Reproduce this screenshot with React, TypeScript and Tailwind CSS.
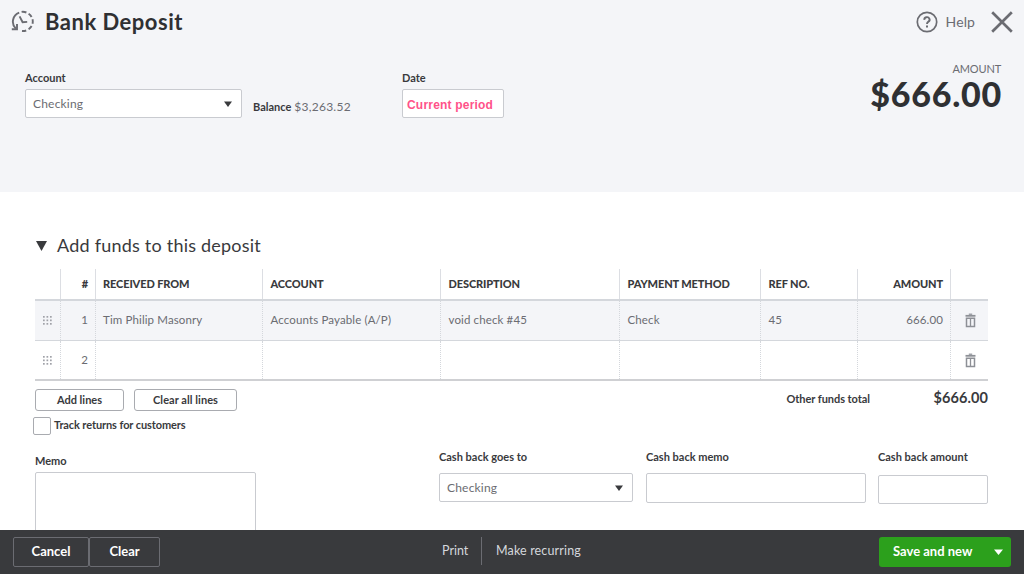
import type { ReactNode } from 'react'

const lines = [
  { num: 1, from: 'Tim Philip Masonry', account: 'Accounts Payable (A/P)', description: 'void check #45', method: 'Check', ref: '45', amount: '666.00' },
  { num: 2, from: '', account: '', description: '', method: '', ref: '', amount: '' },
]

const gridCols = 'grid grid-cols-[26px_35px_167px_178px_179px_141px_97px_93px_37px]'

function HistoryIcon() {
  return (
    <svg className="w-6 h-6" viewBox="0 0 24 24" fill="none" stroke="#6b6c72" strokeWidth="1.9">
      <path d="M4.8 18.6A9.6 9.6 0 0 1 8.2 2.7M10.6 1.9A9.6 9.6 0 0 1 15.4 2.5M17.6 3.7A9.6 9.6 0 0 1 20.6 7M21.5 9.2A9.6 9.6 0 0 1 21.5 13.8M20.6 16A9.6 9.6 0 0 1 17.6 19.2M15.2 20.5A9.6 9.6 0 0 1 11 21" />
      <path d="M0.8 19.2H6V14" />
      <path d="M8.6 6.4L11.6 12.3L16.2 11.9" />
    </svg>
  )
}

function TrashIcon() {
  return (
    <svg className="w-[11px] h-[15px]" viewBox="0 0 11 15" fill="none" stroke="#8d9096">
      <path d="M0.5 2.8H10.5" strokeWidth="1.8" />
      <path d="M3.8 1.2H7.2" strokeWidth="1.2" />
      <path d="M1.5 5.2V13.6H9.5V5.2Z" strokeWidth="1.5" />
      <path d="M5.5 5V13" strokeWidth="1.3" />
    </svg>
  )
}

function DragHandle() {
  return (
    <svg className="w-[9px] h-[9px]" viewBox="0 0 9 9" fill="#a0a2a8">
      {[0, 3.5, 7].map((y) => [0, 3.5, 7].map((x) => <rect key={`${x}-${y}`} x={x} y={y} width="1.7" height="1.7" />))}
    </svg>
  )
}

function Caret({ className }: { className: string }) {
  return (
    <svg className={className} viewBox="0 0 8 6" preserveAspectRatio="none" fill="currentColor">
      <path d="M0 0.5H8L4 6Z" />
    </svg>
  )
}

function Label({ children }: { children: ReactNode }) {
  return <div className="text-[11px] leading-4 font-bold text-[#393a3d] whitespace-nowrap">{children}</div>
}

function Select({ value, className }: { value: string; className: string }) {
  return (
    <div className={`flex items-center justify-between border border-[#c9cbd0] rounded-[2px] bg-white pl-[7px] pr-[9px] text-[12px] tracking-[0.2px] text-[#6b6c72] ${className}`}>
      <span>{value}</span>
      <Caret className="w-2 h-[6px] text-[#393a3d]" />
    </div>
  )
}

export default function App() {
  return (
    <div className="w-[1024px] h-[574px] flex flex-col overflow-hidden bg-white text-[#393a3d] font-['Lato',sans-serif]">
      {/* Header */}
      <header className="h-[192px] shrink-0 bg-[#f4f5f8]">
        <div className="h-[43px] flex items-center justify-between pl-[11px] pr-[11px]">
          <div className="flex items-center">
            <HistoryIcon />
            <h1 className="ml-[10px] text-[22px] font-bold tracking-[0.5px] text-[#2f3033]">Bank Deposit</h1>
          </div>
          <div className="flex items-center text-[#6b6c72]">
            <svg className="w-[22px] h-[22px]" viewBox="0 0 22 22" fill="none" stroke="currentColor" strokeWidth="1.7">
              <circle cx="11" cy="11" r="9.7" />
              <path d="M8.4 8.9A2.6 2.4 0 1 1 12.4 10.6Q11 11.5 11 13" strokeWidth="1.9" />
              <path d="M11 14.4V16.4" strokeWidth="2" />
            </svg>
            <span className="ml-[8px] -mt-px text-[14px] tracking-[0.1px]">Help</span>
            <svg className="ml-[16px] w-[22px] h-[22px]" viewBox="0 0 22 22" fill="none" stroke="currentColor" strokeWidth="2.7">
              <path d="M1.2 1.2L20.8 20.8M20.8 1.2L1.2 20.8" />
            </svg>
          </div>
        </div>

        <div className="flex justify-between pl-[25px] pr-[23px]">
          <div className="flex pt-[27px]">
            <div>
              <Label>Account</Label>
              <Select value="Checking" className="mt-[3px] w-[217px] h-[29px]" />
            </div>
            <div className="ml-[11px] mt-[28px] h-4 w-[149px] flex items-baseline">
              <span className="text-[11px] font-bold">Balance</span>
              <span className="ml-[3px] text-[12px] tracking-[0.25px] text-[#6b6c72]">$3,263.52</span>
            </div>
            <div>
              <Label>Date</Label>
              <div className="mt-[3px] w-[102px] h-[29px] flex items-center border border-[#c9cbd0] rounded-[2px] bg-white pl-[4px] pt-[2px] font-['Liberation_Sans',sans-serif] text-[12px] tracking-[0.2px] font-bold text-[#ff5289] whitespace-nowrap">
                Current period
              </div>
            </div>
          </div>
          <div className="pt-[18px] text-right">
            <div className="text-[11px] leading-4 tracking-[-0.15px] text-[#6b6c72]">AMOUNT</div>
            <div className="text-[34px] leading-[34px] font-black tracking-[0.75px] -mr-px text-[#2f3033]">$666.00</div>
          </div>
        </div>
      </header>

      {/* Deposit lines */}
      <main className="h-[338px] shrink-0 overflow-hidden pl-[35px] pr-[36px]">
        <div className="mt-[41px] h-[24px] flex items-center">
          <Caret className="ml-[1px] w-[11px] h-[11px]" />
          <h2 className="ml-[10px] text-[18px] tracking-[0.22px]">Add funds to this deposit</h2>
        </div>

        <div className="mt-[12px]">
          <div className={`${gridCols} h-[32px] border-b-2 border-[#d4d7dc] text-[11px] font-black tracking-[-0.12px] leading-[29px] [&>*]:border-[#dcdee3] [&>*]:border-r [&>*:last-child]:border-r-0`}>
            <div />
            <div className="text-right pr-[7px]">#</div>
            <div className="pl-[7px]">RECEIVED FROM</div>
            <div className="pl-[7.5px]">ACCOUNT</div>
            <div className="pl-[7.5px]">DESCRIPTION</div>
            <div className="pl-[7.5px]">PAYMENT METHOD</div>
            <div className="pl-[7.5px]">REF NO.</div>
            <div className="text-right pr-[7px]">AMOUNT</div>
            <div />
          </div>
          {lines.map((line) => (
            <div
              key={line.num}
              className={`${gridCols} h-[40px] text-[11.5px] tracking-[0.13px] leading-[37px] text-[#6b6c72] [&>*]:border-[#d4d7dc] [&>*]:border-r [&>*]:border-dotted [&>*:last-child]:border-r-0 ${
                line.num === 1 ? 'bg-[#f4f5f8] border-b border-[#d4d7dc]' : 'border-b-2 border-[#cfd0d3]'
              }`}
            >
              <div className="flex items-center justify-center"><DragHandle /></div>
              <div className="text-right pr-[7px]">{line.num}</div>
              <div className="pl-[7px]">{line.from}</div>
              <div className="pl-[7.5px]">{line.account}</div>
              <div className="pl-[7.5px]">{line.description}</div>
              <div className="pl-[7.5px]">{line.method}</div>
              <div className="pl-[7.5px]">{line.ref}</div>
              <div className="text-right pr-[7px]">{line.amount}</div>
              <div className="flex items-center justify-center pl-px"><TrashIcon /></div>
            </div>
          ))}
        </div>

        <div className="mt-[8px] flex items-center text-[11px] font-bold">
          <button className="w-[89px] h-[22px] border border-[#a9abb0] rounded-[3px]">Add lines</button>
          <button className="ml-[10px] w-[103px] h-[22px] border border-[#a9abb0] rounded-[3px] tracking-[0.05px]">Clear all lines</button>
          <div className="ml-auto -mt-px tracking-[-0.05px]">Other funds total</div>
          <div className="-mt-[4px] w-[118px] text-right text-[14.5px] leading-4 tracking-[0.1px]">$666.00</div>
        </div>
        <div className="-ml-[2px] mt-[6px] flex items-start">
          <div className="w-[18px] h-[18px] border border-[#a9abb0] rounded-[2px]" />
          <div className="ml-[3px] tracking-[-0.1px]"><Label>Track returns for customers</Label></div>
        </div>

        <div className="mt-[14px] flex">
          <div className="shrink-0 pt-[4px] w-[404px]">
            <Label>Memo</Label>
            <div className="mt-[3px] w-[221px] h-[80px] border border-[#c9cbd0] rounded-[2px]" />
          </div>
          <div className="shrink-0">
            <Label>Cash back goes to</Label>
            <Select value="Checking" className="mt-[8px] w-[194px] h-[29px]" />
          </div>
          <div className="shrink-0 ml-[13px]">
            <Label>Cash back memo</Label>
            <div className="mt-[8px] w-[220px] h-[30px] border border-[#c9cbd0] rounded-[2px]" />
          </div>
          <div className="shrink-0 ml-[12px]">
            <Label>Cash back amount</Label>
            <div className="mt-[10px] w-[110px] h-[29px] border border-[#c9cbd0] rounded-[2px]" />
          </div>
        </div>
      </main>

      {/* Footer */}
      <footer className="h-[44px] shrink-0 flex items-center bg-[#393a3d] pl-[13px] pr-[13px] text-white">
        <button className="w-[76px] h-[30px] border border-[#6b6c72] rounded-[2px] text-[13px] font-bold">Cancel</button>
        <button className="w-[71px] h-[30px] border border-[#6b6c72] rounded-[2px] text-[13px] font-bold">Clear</button>
        <div className="ml-[282px] -mt-[2px] w-[26px] text-[12.5px] text-[#d4d7dc]">Print</div>
        <div className="ml-[13px] -mt-[2px] w-px h-[28px] bg-[#6b6c72]" />
        <div className="ml-[14px] -mt-[2px] text-[12.5px] tracking-[0.15px] text-[#d4d7dc]">Make recurring</div>
        <div className="ml-auto w-[132px] h-[30px] flex items-center justify-between rounded-[3px] bg-[#2ca01c] pl-[14px] pr-[8px]">
          <span className="text-[13px] font-bold">Save and new</span>
          <Caret className="w-[9px] h-[6px]" />
        </div>
      </footer>
    </div>
  )
}
